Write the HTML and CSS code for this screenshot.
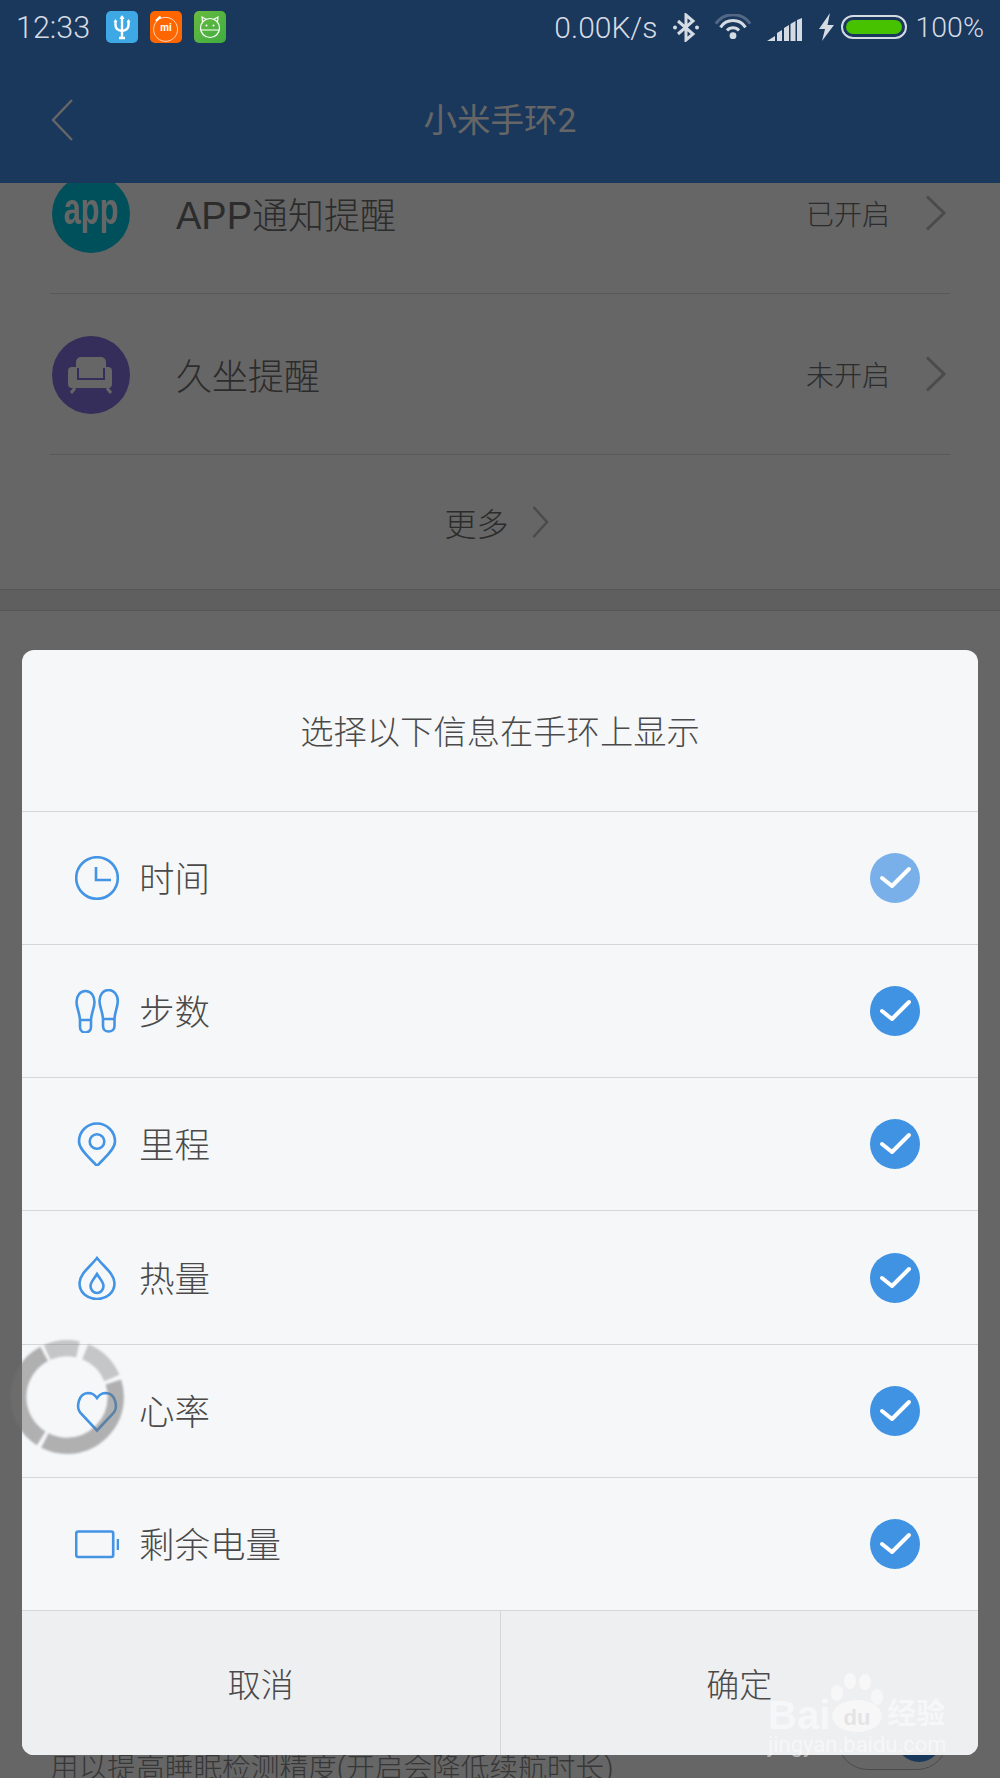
FILE: index.html
```html
<!DOCTYPE html>
<html>
<head>
    <title>小米手环2</title>
    <link rel="stylesheet" href="styles.css">
</head>
<body>
<div class="screen">
    <div class="top">
        <div class="status">
            <span class="clock">12:33</span>
            <svg class="tile" viewBox="0 0 32 32"><rect width="32" height="32" rx="5" fill="#3ea8e4"/><path d="M16 5V27M9.5 10V14Q9.5 19 16 20Q22.5 19 22.5 14V10M13 27H19" fill="none" stroke="#fff" stroke-width="2.4"/><path d="M16 4L13.5 8H18.5ZM9.5 8L7.5 11H11.5ZM22.5 8L20.5 11H24.5Z" fill="#fff"/></svg>
            <svg class="tile" viewBox="0 0 32 32"><rect width="32" height="32" rx="5" fill="#ff6600"/><path d="M9.5 8A12 12 0 1 1 6.5 10.5" fill="none" stroke="#ffd9c0" stroke-width="1"/><path d="M6 10L10.5 5.5" stroke="#fff" stroke-width="2.4"/><text class="mi" x="16" y="20">mi</text></svg>
            <svg class="tile" viewBox="0 0 32 32"><defs><linearGradient id="greenTile" x1="0" y1="0" x2="1" y2="1"><stop offset="0" stop-color="#68bb3f"/><stop offset="1" stop-color="#3fac40"/></linearGradient></defs><rect width="32" height="32" rx="5" fill="url(#greenTile)"/><circle cx="16" cy="17" r="9.5" fill="none" stroke="#fff" stroke-width="1.2"/><path d="M8.500 11L8 6L12.500 8.500M23.500 11L24 6L19.500 8.500M6.500 19H25.500" fill="none" stroke="#fff" stroke-width="1.2"/><circle cx="12.5" cy="14.5" r="1" fill="#fff"/><circle cx="19.5" cy="14.5" r="1" fill="#fff"/></svg>
            <div class="status-right">
                <span class="speed">0.00K/s</span>
                <svg class="bt" viewBox="0 0 26 29"><path d="M5 8L20 21L13 27V2L20 8L5 21" fill="none" stroke="#d5dbe3" stroke-width="3"/><circle cx="2" cy="14.5" r="2" fill="#d5dbe3"/><circle cx="24" cy="14.5" r="2" fill="#d5dbe3"/></svg>
                <svg class="wifi" viewBox="0 0 36 26"><path d="M0.800 9.700A21 21 0 0 1 35.200 9.700" fill="none" stroke="#d5dbe3" stroke-opacity=".3" stroke-width="3"/><path d="M5.500 13.300A15 15 0 0 1 30.500 13.300M12 16.400A8 8 0 0 1 24 16.400" fill="none" stroke="#d5dbe3" stroke-width="3"/><circle cx="18" cy="21.7" r="3.4" fill="#d5dbe3"/></svg>
                <svg class="signal" viewBox="0 0 35 23"><path d="M0 23L8 18V23ZM10 23V15L15 12V23ZM17 23V10L22 7V23ZM23.500 23V6L28.500 3V23ZM30 23V2L35 0V23Z" fill="#d5dbe3"/></svg>
                <svg class="bolt" viewBox="0 0 16 28"><path d="M12 0L1 16H7L4 28L16 12H9.500Z" fill="#d5dbe3"/></svg>
                <div class="battery"><div class="battery-fill"></div></div>
                <span class="percent">100%</span>
            </div>
        </div>
        <div class="appbar">
            <svg class="back" viewBox="0 0 23 42"><path d="M21 1L2 21L21 41" fill="none" stroke="#fff" stroke-width="2.400"/></svg>
            <span class="appbar-title">小米手环2</span>
        </div>
    </div>

    <div class="content">
        <div class="scroller">
            <div class="item">
                <div class="badge badge-app"><span class="app-word">app</span></div>
                <span class="item-name"><span class="latin">APP</span>通知提醒</span>
                <span class="item-state">已开启</span>
                <svg class="chev" viewBox="0 0 21 36"><path d="M2 1.500L19 18L2 34.500" fill="none" stroke="#bbb" stroke-width="3"/></svg>
            </div>
            <div class="item">
                <div class="badge badge-sit">
                    <svg class="sofa" viewBox="0 0 78 78"><rect x="16" y="31" width="44" height="21" rx="4" fill="#fff"/><rect x="24" y="21" width="30" height="20" rx="5" fill="#fff"/><path d="M26 32V43H52V32" fill="none" stroke="#8470e1" stroke-width="2"/><path d="M23 52L19 57M55 52L59 57" stroke="#fff" stroke-width="3"/></svg>
                </div>
                <span class="item-name">久坐提醒</span>
                <span class="item-state">未开启</span>
                <svg class="chev" viewBox="0 0 21 36"><path d="M2 1.500L19 18L2 34.500" fill="none" stroke="#bbb" stroke-width="3"/></svg>
            </div>
            <div class="more">
                <span>更多</span>
                <svg class="more-chev" viewBox="0 0 17 32"><path d="M1.500 1L15 16L1.500 31" fill="none" stroke="#bbb" stroke-width="2.500"/></svg>
            </div>
            <div class="band"></div>
            <div class="sleep">
                <span class="sleep-text">用以提高睡眠检测精度(开启会降低续航时长)</span>
                <div class="switch"><div class="switch-knob"></div></div>
            </div>
        </div>
    </div>

    <div class="dim"></div>

    <div class="dialog">
        <div class="dialog-title">选择以下信息在手环上显示</div>
        <div class="option">
            <svg class="option-icon" viewBox="0 0 44 44"><circle cx="22" cy="22" r="20.800"/><path d="M21 11V24H36"/></svg>
            <span class="option-name">时间</span>
            <svg class="tick tick-busy" viewBox="0 0 50 50"><circle cx="25" cy="25" r="25"/><path d="M12 25L22 33L39 16"/></svg>
        </div>
        <div class="option">
            <svg class="option-icon" viewBox="0 0 44 44"><path d="M10.500 2C5 2 1.500 7 1.500 13C1.500 19 4.500 23 5 31V38C5 41.500 7.500 43.500 10.500 43.500C13.500 43.500 16 41.500 16 38V31C16.500 23 19.500 19 19.500 13C19.500 7 16 2 10.500 2ZM5 31H16"/><path d="M33.500 1C39 1 42.800 6 42.800 12C42.800 18 40 22 39.500 30V37C39.500 40.500 37 42.500 33.500 42.500C30.500 42.500 28 40.500 28 37V30C27.500 22 24.500 18 24.500 12C24.500 6 28 1 33.500 1ZM28 30H39.500"/></svg>
            <span class="option-name">步数</span>
            <svg class="tick" viewBox="0 0 50 50"><circle cx="25" cy="25" r="25"/><path d="M12 25L22 33L39 16"/></svg>
        </div>
        <div class="option">
            <svg class="option-icon" viewBox="0 0 44 44"><path d="M22 44C16 37 4 28 4 19.500A18 18 0 0 1 40 19.500C40 28 28 37 22 44Z"/><circle cx="22" cy="19.500" r="7.300"/></svg>
            <span class="option-name">里程</span>
            <svg class="tick" viewBox="0 0 50 50"><circle cx="25" cy="25" r="25"/><path d="M12 25L22 33L39 16"/></svg>
        </div>
        <div class="option">
            <svg class="option-icon" viewBox="0 0 44 44"><path d="M22 2C15 11 4.500 18 4.500 27C4.500 36.500 12 43 22 43C32 43 39.500 36.500 39.500 27C39.500 18 29 11 22 2Z"/><path d="M22 18C19 23 15.500 26 15.500 30C15.500 34 18.500 37 22 37C25.500 37 28.500 34 28.500 30C28.500 26 25 23 22 18Z"/></svg>
            <span class="option-name">热量</span>
            <svg class="tick" viewBox="0 0 50 50"><circle cx="25" cy="25" r="25"/><path d="M12 25L22 33L39 16"/></svg>
        </div>
        <div class="option">
            <svg class="option-icon" viewBox="0 0 44 44"><path d="M22 41.500L5.500 24C1 18.500 3 4.500 13 4C17 4 20 6 22 9C24 6 27 4 31 4C41 4.500 43 18.500 38.500 24Z"/></svg>
            <span class="option-name">心率</span>
            <svg class="tick" viewBox="0 0 50 50"><circle cx="25" cy="25" r="25"/><path d="M12 25L22 33L39 16"/></svg>
        </div>
        <div class="option">
            <svg class="option-icon" viewBox="0 0 44 44"><rect x="1.200" y="9.500" width="37" height="25.500" rx="2"/><path d="M43 17V28"/></svg>
            <span class="option-name">剩余电量</span>
            <svg class="tick" viewBox="0 0 50 50"><circle cx="25" cy="25" r="25"/><path d="M12 25L22 33L39 16"/></svg>
        </div>
        <div class="actions">
            <div class="action">取消</div>
            <div class="action">确定</div>
        </div>
    </div>

    <!-- floating assistant ball -->
    <svg class="ball" viewBox="0 0 124 124">
        <g transform="rotate(-90 62 62)" fill="none" stroke-width="16">
            <circle class="seg-light" cx="62" cy="62" r="48" pathLength="360" stroke-dasharray="37 323" stroke-dashoffset="24"/>
            <circle class="seg-light" cx="62" cy="62" r="48" pathLength="360" stroke-dasharray="45 315" stroke-dashoffset="-22"/>
            <circle class="seg-dark" cx="62" cy="62" r="48" pathLength="360" stroke-dasharray="135 225" stroke-dashoffset="-72"/>
            <circle class="seg-dark" cx="62" cy="62" r="48" pathLength="360" stroke-dasharray="120 240" stroke-dashoffset="-212"/>
        </g>
    </svg>

    <div class="watermark">
        <div class="mark-row">
            <span class="mark-bai">Bai</span>
            <svg class="paw" viewBox="0 0 54 60"><ellipse cx="7" cy="21" rx="6" ry="8"/><ellipse cx="20" cy="9" rx="6" ry="8"/><ellipse cx="35" cy="10" rx="6" ry="8"/><ellipse cx="47" cy="25" rx="6" ry="8"/><ellipse cx="27" cy="44" rx="25" ry="16"/><text class="mark-du" x="27" y="53">du</text></svg>
            <span class="mark-cn">经验</span>
        </div>
        <div class="mark-site">jingyan.baidu.com</div>
    </div>
</div>
</body>
</html>
```

FILE: styles.css
```css
* {
    box-sizing: border-box;
}
body {
    margin: 0;
    font-family: Roboto, "Noto Sans CJK SC", sans-serif;
}
.screen {
    position: relative;
    height: 1778px;
    overflow: hidden;
    background: #fff;
}
.top {
    height: 183px;
    background: #4189e6;
}
.status {
    position: relative;
    z-index: 3;
    display: flex;
    align-items: center;
    height: 56px;
    padding: 0 16px 2px 16px;
    color: #d5dbe3;
    font-size: 30px;
    font-weight: 300;
}
.clock {
    margin-right: 16px;
    font-size: 30.500px;
}
.tile {
    width: 32px;
    height: 32px;
    margin-right: 12px;
}
.mi {
    fill: #fff;
    font-size: 10px;
    font-weight: 700;
    text-anchor: middle;
}
.status-right {
    display: flex;
    align-items: center;
    margin-left: auto;
}
.bt {
    width: 26px;
    height: 29px;
    margin-left: 15px;
}
.wifi {
    width: 36px;
    height: 26px;
    margin-left: 16px;
}
.signal {
    width: 35px;
    height: 23px;
    margin-left: 16px;
    margin-top: 5px;
}
.bolt {
    width: 16px;
    height: 28px;
    margin-left: 16px;
}
.battery {
    width: 66px;
    height: 24px;
    margin-left: 7px;
    padding: 3px;
    border: 2px solid #d5dbe3;
    border-radius: 12px;
}
.battery-fill {
    height: 100%;
    border-radius: 8px;
    background: #46c200;
}
.percent {
    margin-left: 9px;
    font-size: 28.500px;
}
.appbar {
    position: relative;
    display: flex;
    align-items: center;
    justify-content: center;
    height: 127px;
    padding-bottom: 5px;
    color: #fff;
    font-size: 33.500px;
}
.back {
    position: absolute;
    left: 51px;
    top: 43px;
    width: 23px;
    height: 42px;
}
.content {
    height: 1595px;
    overflow: hidden;
}
.scroller {
    margin-top: -50px;
}
.item {
    display: flex;
    align-items: center;
    height: 161px;
    margin: 0 50px;
    border-bottom: 1px solid #dedede;
}
.badge {
    display: flex;
    align-items: center;
    justify-content: center;
    width: 78px;
    height: 78px;
    margin: 1px 0 0 2px;
    border-radius: 50%;
    color: #fff;
}
.badge-app {
    background: #00c8e6;
}
.badge-sit {
    background: #8470e1;
}
.app-word {
    display: inline-block;
    font-family: "Liberation Sans", sans-serif;
    font-size: 44px;
    font-weight: 700;
    line-height: 1;
    margin-top: -9px;
    transform: scaleX(0.7);
}
.sofa {
    width: 78px;
    height: 78px;
}
.item-name {
    margin-left: 46px;
    color: #6e6e6e;
    font-size: 36px;
    font-weight: 300;
}
.latin {
    font-family: "Liberation Sans", sans-serif;
    font-size: 38px;
}
.item-state {
    margin-left: auto;
    color: #6e6e6e;
    font-size: 28px;
    font-weight: 300;
}
.chev {
    width: 21px;
    height: 36px;
    margin-left: 35px;
    margin-right: 4px;
}
.more {
    display: flex;
    align-items: center;
    justify-content: center;
    height: 134px;
    padding-right: 7px;
    color: #6e6e6e;
    font-size: 32px;
    font-weight: 300;
}
.more-chev {
    width: 17px;
    height: 32px;
    margin-left: 23px;
}
.band {
    height: 22px;
    background: #ebeeeb;
    border-top: 1px solid #d8d8d8;
    border-bottom: 1px solid #d8d8d8;
}
.sleep {
    display: flex;
    justify-content: space-between;
    margin: 1097px 52px 0 50px;
}
.sleep-text {
    margin-top: 37px;
    color: #8a8a8a;
    font-size: 28.700px;
    font-weight: 300;
    white-space: nowrap;
}
.switch {
    display: flex;
    align-items: center;
    justify-content: flex-end;
    width: 111px;
    height: 62px;
    padding: 0 5px;
    border: 1px solid #bbb;
    border-radius: 31px;
}
.switch-knob {
    width: 46px;
    height: 46px;
    border-radius: 50%;
    background: #3f8fe6;
}
.dim {
    position: absolute;
    inset: 0;
    z-index: 1;
    background: rgba(0, 0, 0, 0.6);
}
.dialog {
    position: absolute;
    left: 22px;
    top: 650px;
    z-index: 2;
    width: 956px;
    height: 1105px;
    overflow: hidden;
    border-radius: 12px;
    background: #f6f7f9;
    color: #4a4a4a;
    font-weight: 300;
}
.dialog-title {
    display: flex;
    align-items: center;
    justify-content: center;
    height: 161.500px;
    padding-bottom: 2px;
    border-bottom: 1px solid #d5d6d8;
    font-size: 33.300px;
}
.option {
    display: flex;
    align-items: center;
    height: 133.33px;
    padding: 0 58px 0 53px;
    border-bottom: 1px solid #d5d6d8;
}
.option-icon {
    width: 44px;
    height: 44px;
    fill: none;
    stroke: #4394e4;
    stroke-width: 2.6;
}
.option-name {
    margin: -3px 0 0 20px;
    font-size: 35.500px;
}
.tick {
    width: 50px;
    height: 50px;
    margin-left: auto;
    fill: #4092e2;
}
.tick path {
    fill: none;
    stroke: #fff;
    stroke-width: 4;
    stroke-linecap: round;
    stroke-linejoin: round;
}
.tick-busy {
    fill: #7ab0ea;
}
.actions {
    display: flex;
    height: 143.500px;
    background: #eeeff1;
}
.action {
    display: flex;
    flex: 1;
    align-items: center;
    justify-content: center;
    font-size: 33px;
}
.action + .action {
    border-left: 1px solid #d5d6d8;
}
.ball {
    position: absolute;
    left: 4px;
    top: 1334px;
    z-index: 3;
    width: 126px;
    height: 126px;
    filter: blur(0.8px);
}
.seg-light {
    stroke: rgba(113, 113, 113, 0.37);
}
.seg-dark {
    stroke: rgba(113, 113, 113, 0.53);
}
.watermark {
    position: absolute;
    left: 768px;
    top: 1672px;
    z-index: 4;
    color: rgba(255, 255, 255, 0.5);
}
.mark-row {
    display: flex;
    align-items: flex-end;
    height: 60px;
}
.mark-bai {
    font-family: "Liberation Sans", sans-serif;
    font-size: 40px;
    font-weight: 700;
    line-height: 1;
    margin-bottom: -3px;
}
.paw {
    width: 54px;
    height: 60px;
    fill: rgba(255, 255, 255, 0.5);
}
.mark-du {
    fill: #e4e4e6;
    font-family: "Liberation Sans", sans-serif;
    font-size: 22px;
    font-weight: 700;
    text-anchor: middle;
}
.mark-cn {
    margin-left: 3px;
    font-size: 29px;
    font-weight: 700;
}
.mark-site {
    font-size: 22px;
    line-height: 26px;
    white-space: nowrap;
}
```
